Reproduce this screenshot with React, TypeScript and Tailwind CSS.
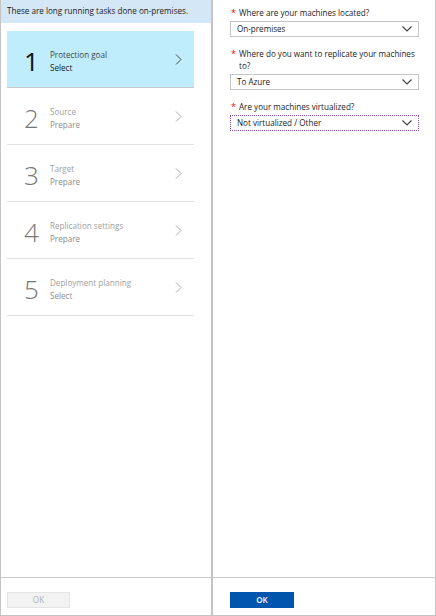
const font = { fontFamily: '"Open Sans", "Noto Sans", sans-serif' }

const steps = [
  { n: '1', title: 'Protection goal', sub: 'Select', active: true },
  { n: '2', title: 'Source', sub: 'Prepare' },
  { n: '3', title: 'Target', sub: 'Prepare' },
  { n: '4', title: 'Replication settings', sub: 'Prepare' },
  { n: '5', title: 'Deployment planning', sub: 'Select' },
]

const ChevronRight = ({ color }: { color: string }) => (
  <svg width="7" height="11" viewBox="0 0 7 11" fill="none">
    <polyline points="1,0.5 6,5.5 1,10.5" stroke={color} strokeWidth="1" />
  </svg>
)

const ChevronDown = () => (
  <svg width="10" height="6" viewBox="0 0 10 6" fill="none">
    <polyline points="0.5,0.5 5,5 9.5,0.5" stroke="#444" strokeWidth="1.2" />
  </svg>
)

const Field = ({ label, value, focused }: { label: string; value: string; focused?: boolean }) => (
  <div className="flex flex-col">
    <div className="flex text-[8.1px] leading-[12px] text-[#222]">
      <span className="ml-[1px] w-[8px] shrink-0 text-[9px] text-[#e00]">*</span>
      <span>{label}</span>
    </div>
    <div
      className={
        'mt-[2px] flex h-[16px] items-center justify-between pl-[6px] pr-[6px] text-[8.1px] text-[#222] ' +
        (focused ? 'border border-dotted border-[#8a4fbf]' : 'border border-[#c6c6c6]')
      }
    >
      <span>{value}</span>
      <ChevronDown />
    </div>
  </div>
)

export default function App() {
  return (
    <div style={font} className="flex h-[616px] w-[436px] border-x border-b border-[#c4c4c4] bg-white">
      <div className="flex w-[212px] shrink-0 flex-col border-r-2 border-[#c4c4c4]">
        <div className="flex h-[23px] items-center whitespace-nowrap bg-[#d3e7f6] px-[6px] text-[8.1px] text-[#222]">
          These are long running tasks done on-premises.
        </div>
        <div className="mt-[8px] ml-[6px] flex w-[187px] flex-1 flex-col">
          {steps.map((s) => (
            <div
              key={s.n}
              className={
                'flex h-[57px] items-center pt-[4px] ' +
                (s.active ? 'border-b border-[#c9c9c9] bg-[#bfedfb]' : 'border-b border-[#e3e3e3]')
              }
            >
              <div
                className={
                  'w-[43px] pl-[17px] text-[26px] leading-none ' +
                  (s.active ? 'text-[#111]' : 'font-light text-[#777]')
                }
              >
                {s.n}
              </div>
              <div className="flex flex-1 flex-col text-[8.1px] leading-[13px]">
                <span className={s.active ? 'text-[#444]' : 'text-[#a0a0a0]'}>{s.title}</span>
                <span className={s.active ? 'text-[#222]' : 'text-[#8c8c8c]'}>{s.sub}</span>
              </div>
              <div className="mr-[12px] mb-[4px]">
                <ChevronRight color={s.active ? '#444' : '#aaa'} />
              </div>
            </div>
          ))}
        </div>
        <div className="flex h-[38px] shrink-0 items-start border-t border-[#c9c9c9] pt-[14px] pl-[6px]">
          <div className="flex h-[16px] w-[63px] items-center justify-center border border-[#e4e4e4] bg-[#f2f2f2] text-[8.1px] text-[#b0b0b0]">
            OK
          </div>
        </div>
      </div>
      <div className="flex flex-1 flex-col">
        <div className="flex flex-1 flex-col gap-[11px] pt-[7px] pl-[17px] pr-[16px]">
          <Field label="Where are your machines located?" value="On-premises" />
          <Field label="Where do you want to replicate your machines to?" value="To Azure" />
          <Field label="Are your machines virtualized?" value="Not virtualized / Other" focused />
        </div>
        <div className="flex h-[38px] shrink-0 items-start border-t border-[#c9c9c9] pt-[14px] pl-[17px]">
          <div className="flex h-[16px] w-[64px] items-center justify-center bg-[#0056ad] text-[8.1px] font-semibold text-white">
            OK
          </div>
        </div>
      </div>
    </div>
  )
}
